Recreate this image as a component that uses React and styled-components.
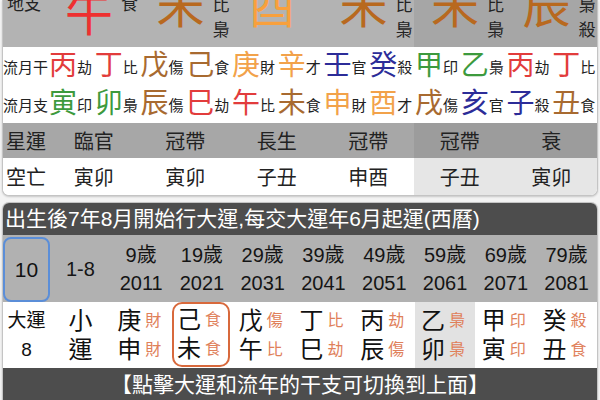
import React from "react";
import styled, { createGlobalStyle } from "styled-components";

const FONT = `"Liberation Sans", "Noto Sans CJK TC", sans-serif`;

const Global = createGlobalStyle`
  html, body { margin: 0; padding: 0; background: #f3f3f3; }
  body { font-family: ${FONT}; color: #1c1c1c; }
  * { box-sizing: border-box; }
`;

const C = {
  wood: "#3d9a3d",
  fire: "#e23c3c",
  earth: "#a86a30",
  metal: "#f2a24a",
  water: "#2c2c98",
};

const Page = styled.div`
  width: 600px;
  height: 400px;
  overflow: hidden;
  display: flex;
  flex-direction: column;
  gap: 6px;
  padding: 0 2px;
`;

const Card = styled.div`
  flex-shrink: 0;
  background: #fff;
  border: 1px solid #c4c4c4;
  border-top-width: ${(p) => (p.$cutTop ? 0 : 1)}px;
  border-bottom-width: ${(p) => (p.$cutTop ? 1 : 0)}px;
  border-radius: ${(p) => (p.$cutTop ? "0 0 7px 7px" : "7px 7px 0 0")};
  box-shadow: 0 1px 2px rgba(0, 0, 0, 0.18);
  overflow: hidden;
`;

/* ---------- card 1 ---------- */
const SixGrid = styled.div`
  display: grid;
  grid-template-columns: 45px repeat(6, 1fr);
  height: ${(p) => p.$h}px;
  overflow: hidden;
`;

const TopCell = styled.div`
  display: flex;
  align-items: flex-end;
  padding-left: ${(p) => (p.$label ? 4 : 17)}px;
  background: ${(p) => (p.$hl ? "#a6a6a6" : "#b3b3b3")};
  overflow: hidden;
`;

const BigChar = styled.span`
  font-size: 48px;
  line-height: 1;
  color: ${(p) => p.$color};
  margin-bottom: ${(p) => p.$mb}px;
`;

const LabelStack = styled.div`
  display: flex;
  flex-direction: column;
  margin-left: ${(p) => (p.$first ? 0 : 8)}px;
  margin-bottom: ${(p) => p.$mb}px;
  font-size: 17px;
  line-height: 25px;
  color: #222;
`;

const TwelveGrid = styled.div`
  display: grid;
  grid-template-columns: 45px repeat(12, 1fr);
  height: 38px;
  background: #fff;
`;

const RowLabel = styled.div`
  display: flex;
  align-items: center;
  font-size: 15px;
  color: #222;
  white-space: nowrap;
`;

const MonthItem = styled.div`
  display: flex;
  align-items: center;
  padding-left: 1px;
`;

const MonthChar = styled.span`
  font-size: 28px;
  line-height: 1;
  color: ${(p) => p.$color};
`;

const MonthTag = styled.span`
  font-size: 15px;
  color: #222;
`;

const StarCell = styled.div`
  display: flex;
  align-items: center;
  justify-content: ${(p) => (p.$label ? "flex-start" : "center")};
  padding-left: ${(p) => (p.$label ? 3 : 0)}px;
  font-size: 20px;
  color: #222;
  background: ${(p) =>
    p.$head ? (p.$hl ? "#9c9c9c" : "#a7a7a7") : p.$hl ? "#e6e6e6" : "#fff"};
`;

/* ---------- card 2 ---------- */
const DarkBar = styled.div`
  height: ${(p) => p.$h}px;
  line-height: ${(p) => p.$h}px;
  background: #4d4d4d;
  color: #fff;
  font-size: ${(p) => p.$fs}px;
  text-align: ${(p) => (p.$center ? "center" : "left")};
  padding-left: ${(p) => (p.$center ? 0 : 2)}px;
  white-space: nowrap;
`;

const TenGrid = styled.div`
  display: grid;
  grid-template-columns: 47px repeat(9, 1fr);
  height: ${(p) => p.$h}px;
  background: ${(p) => p.$bg};
`;

const YearBox = styled.div`
  margin-top: 2px;
  border: 2px solid #5b8ed8;
  border-radius: 8px;
  display: flex;
  align-items: center;
  justify-content: center;
  font-size: 21px;
  color: #111;
`;

const AgeCell = styled.div`
  display: flex;
  flex-direction: column;
  align-items: center;
  justify-content: center;
  font-size: 20px;
  line-height: 28px;
  color: #151515;
  white-space: nowrap;
`;

const LuckCell = styled.div`
  display: flex;
  flex-direction: column;
  align-items: center;
  justify-content: center;
  padding-right: ${(p) => (p.$tags ? 4 : 0)}px;
  background: ${(p) => (p.$shade ? "#e2e2e2" : "transparent")};
  border: ${(p) => (p.$boxed ? "2px solid #d8693c" : "none")};
  border-radius: ${(p) => (p.$boxed ? "10px" : "0")};
  margin: ${(p) => (p.$boxed ? "0 2px 1px 0" : "0")};
`;

const LuckLine = styled.div`
  display: flex;
  align-items: center;
  gap: 4px;
  height: 29px;
`;

const LuckChar = styled.span`
  font-size: ${(p) => (p.$small ? 19 : 24)}px;
  line-height: 1;
  color: #111;
`;

const LuckTag = styled.span`
  font-size: 16px;
  line-height: 1;
  color: #e0805a;
`;

/* ---------- data ---------- */
const topPillars = [
  { ch: "午", color: "#ee3030", mb: 8, tags: ["食"], tmb: 30 },
  { ch: "未", color: "#b8691f", mb: 16, tags: ["比", "梟"], tmb: 4 },
  { ch: "酉", color: "#f8a03c", mb: 16, tags: [], tmb: 4 },
  { ch: "未", color: "#b8691f", mb: 16, tags: ["比", "梟"], tmb: 4 },
  { ch: "未", color: "#b8691f", mb: 16, tags: ["比", "梟"], tmb: 4, hl: true },
  { ch: "辰", color: "#b8691f", mb: 16, tags: ["梟", "殺"], tmb: 4, hl: true },
];

const stems = [
  ["丙", "劫", C.fire], ["丁", "比", C.fire], ["戊", "傷", C.earth], ["己", "食", C.earth],
  ["庚", "財", C.metal], ["辛", "才", C.metal], ["壬", "官", C.water], ["癸", "殺", C.water],
  ["甲", "印", C.wood], ["乙", "梟", C.wood], ["丙", "劫", C.fire], ["丁", "比", C.fire],
];

const branches = [
  ["寅", "印", C.wood], ["卯", "梟", C.wood], ["辰", "傷", C.earth], ["巳", "劫", C.fire],
  ["午", "比", C.fire], ["未", "食", C.earth], ["申", "財", C.metal], ["酉", "才", C.metal],
  ["戌", "傷", C.earth], ["亥", "官", C.water], ["子", "殺", C.water], ["丑", "食", C.earth],
];

const stars = ["臨官", "冠帶", "長生", "冠帶", "冠帶", "衰"];
const voids = ["寅卯", "寅卯", "子丑", "申酉", "子丑", "寅卯"];

const ages = [
  ["9歲", "2011"], ["19歲", "2021"], ["29歲", "2031"], ["39歲", "2041"],
  ["49歲", "2051"], ["59歲", "2061"], ["69歲", "2071"], ["79歲", "2081"],
];

const lucks = [
  { s: ["庚", "財"], b: ["申", "財"] },
  { s: ["己", "食"], b: ["未", "食"], boxed: true },
  { s: ["戊", "傷"], b: ["午", "比"] },
  { s: ["丁", "比"], b: ["巳", "劫"] },
  { s: ["丙", "劫"], b: ["辰", "傷"] },
  { s: ["乙", "梟"], b: ["卯", "梟"], shade: true },
  { s: ["甲", "印"], b: ["寅", "印"] },
  { s: ["癸", "殺"], b: ["丑", "食"] },
];

const MonthRow = ({ label, items }) => (
  <TwelveGrid>
    <RowLabel>{label}</RowLabel>
    {items.map(([ch, tag, color], i) => (
      <MonthItem key={i}>
        <MonthChar $color={color}>{ch}</MonthChar>
        <MonthTag>{tag}</MonthTag>
      </MonthItem>
    ))}
  </TwelveGrid>
);

export default function App() {
  return (
    <>
      <Global />
      <Page>
        <Card $cutTop>
          <SixGrid $h={47}>
            <TopCell $label>
              <LabelStack $mb={30} $first>
                <span>地支</span>
              </LabelStack>
            </TopCell>
            {topPillars.map((p, i) => (
              <TopCell key={i} $hl={p.hl}>
                <BigChar $color={p.color} $mb={p.mb}>{p.ch}</BigChar>
                <LabelStack $mb={p.tmb}>
                  {p.tags.map((t, j) => (
                    <span key={j}>{t}</span>
                  ))}
                </LabelStack>
              </TopCell>
            ))}
          </SixGrid>
          <MonthRow label="流月干" items={stems} />
          <MonthRow label="流月支" items={branches} />
          <SixGrid $h={35}>
            <StarCell $head $label>星運</StarCell>
            {stars.map((s, i) => (
              <StarCell key={i} $head $hl={i >= 4}>{s}</StarCell>
            ))}
          </SixGrid>
          <SixGrid $h={37}>
            <StarCell $label>空亡</StarCell>
            {voids.map((s, i) => (
              <StarCell key={i} $hl={i >= 4}>{s}</StarCell>
            ))}
          </SixGrid>
        </Card>

        <Card>
          <DarkBar $h={32} $fs={21}>出生後7年8月開始行大運,每交大運年6月起運(西曆)</DarkBar>
          <TenGrid $h={67} $bg="#b1b1b1">
            <YearBox>10</YearBox>
            <AgeCell>1-8</AgeCell>
            {ages.map(([a, y], i) => (
              <AgeCell key={i}>
                <span>{a}</span>
                <span>{y}</span>
              </AgeCell>
            ))}
          </TenGrid>
          <TenGrid $h={66} $bg="#fff">
            <LuckCell>
              <LuckLine><LuckChar $small>大運</LuckChar></LuckLine>
              <LuckLine><LuckChar $small>8</LuckChar></LuckLine>
            </LuckCell>
            <LuckCell>
              <LuckLine><LuckChar>小</LuckChar></LuckLine>
              <LuckLine><LuckChar>運</LuckChar></LuckLine>
            </LuckCell>
            {lucks.map((l, i) => (
              <LuckCell key={i} $tags $boxed={l.boxed} $shade={l.shade}>
                <LuckLine>
                  <LuckChar>{l.s[0]}</LuckChar>
                  <LuckTag>{l.s[1]}</LuckTag>
                </LuckLine>
                <LuckLine>
                  <LuckChar>{l.b[0]}</LuckChar>
                  <LuckTag>{l.b[1]}</LuckTag>
                </LuckLine>
              </LuckCell>
            ))}
          </TenGrid>
          <DarkBar $h={34} $fs={21} $center>【點擊大運和流年的干支可切換到上面】</DarkBar>
        </Card>
      </Page>
    </>
  );
}
